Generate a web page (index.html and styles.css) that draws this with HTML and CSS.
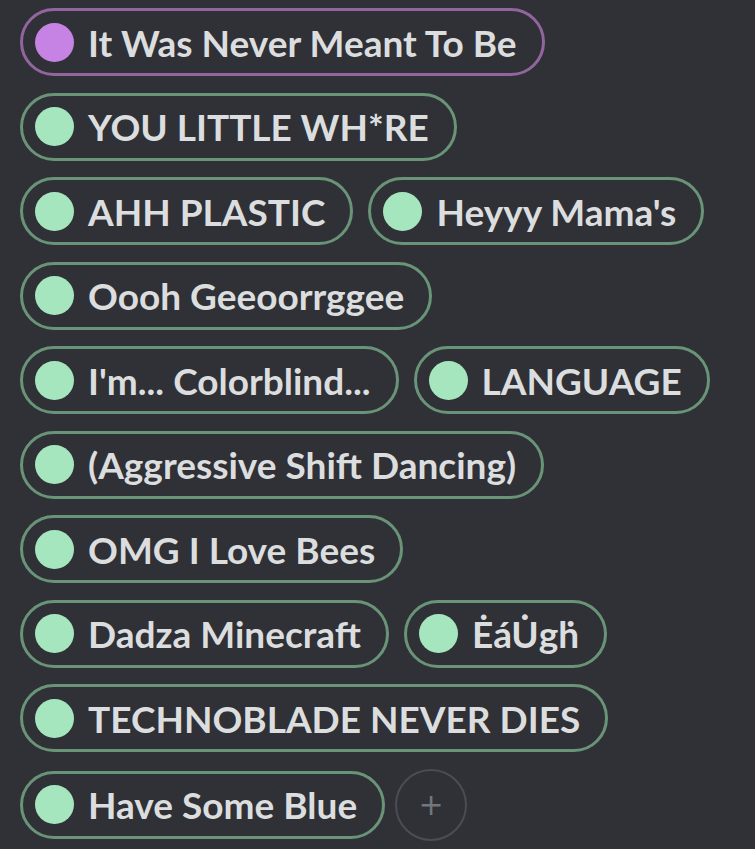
FILE: index.html
```html
<!DOCTYPE html>
<html lang="en">
  <head>
    <meta charset="UTF-8" />
    <title>Roles</title>
    <link rel="stylesheet" href="styles.css">
  </head>
  <body>
    <div class="roles">
      <div class="role role-purple"><span class="dot"></span><span class="name">It Was Never Meant To Be</span></div>
      <div class="role"><span class="dot"></span><span class="name">YOU LITTLE WH*RE</span></div>
      <div class="role"><span class="dot"></span><span class="name">AHH PLASTIC</span></div>
      <div class="role"><span class="dot"></span><span class="name">Heyyy Mama's</span></div>
      <div class="role"><span class="dot"></span><span class="name">Oooh Geeoorrggee</span></div>
      <div class="role"><span class="dot"></span><span class="name">I'm... Colorblind...</span></div>
      <div class="role"><span class="dot"></span><span class="name">LANGUAGE</span></div>
      <div class="role"><span class="dot"></span><span class="name">(Aggressive Shift Dancing)</span></div>
      <div class="role"><span class="dot"></span><span class="name">OMG I Love Bees</span></div>
      <div class="role"><span class="dot"></span><span class="name">Dadza Minecraft</span></div>
      <div class="role"><span class="dot"></span><span class="name">ĖáU̇gḣ</span></div>
      <div class="role"><span class="dot"></span><span class="name">TECHNOBLADE NEVER DIES</span></div>
      <div class="role"><span class="dot"></span><span class="name">Have Some Blue</span></div>
      <button class="add-role">+</button>
    </div>
  </body>
</html>
```
FILE: styles.css
```css
body {
  margin: 0;
  background-color: #2f3136;
  font-family: Lato, "Open Sans", sans-serif;
  color: #dcddde;
}

.roles {
  display: flex;
  flex-wrap: wrap;
  align-items: center;
  row-gap: 16.5px;
  column-gap: 15px;
  padding: 8px 20px 0 20px;
}

.role {
  display: flex;
  align-items: center;
  box-sizing: border-box;
  height: 68px;
  padding: 0 25px 0 12px;
  border: 3px solid #6a9478;
  border-radius: 34px;
  background-color: #2f3136;
}

.role-purple {
  border-color: #93659f;
}

.dot {
  width: 39px;
  height: 39px;
  border-radius: 50%;
  background-color: #a5e6bf;
  margin-right: 14px;
  flex-shrink: 0;
}

.role-purple .dot {
  background-color: #c683e3;
}

.name {
  font-size: 37px;
  font-weight: 700;
  white-space: nowrap;
}

.add-role {
  box-sizing: border-box;
  width: 72px;
  height: 72px;
  border: 2px solid #4a4d54;
  border-radius: 50%;
  background: transparent;
  color: #72767d;
  font-family: "DejaVu Sans", sans-serif;
  font-size: 30px;
  line-height: 1;
  padding: 0;
  margin-left: -5px;
}
```
